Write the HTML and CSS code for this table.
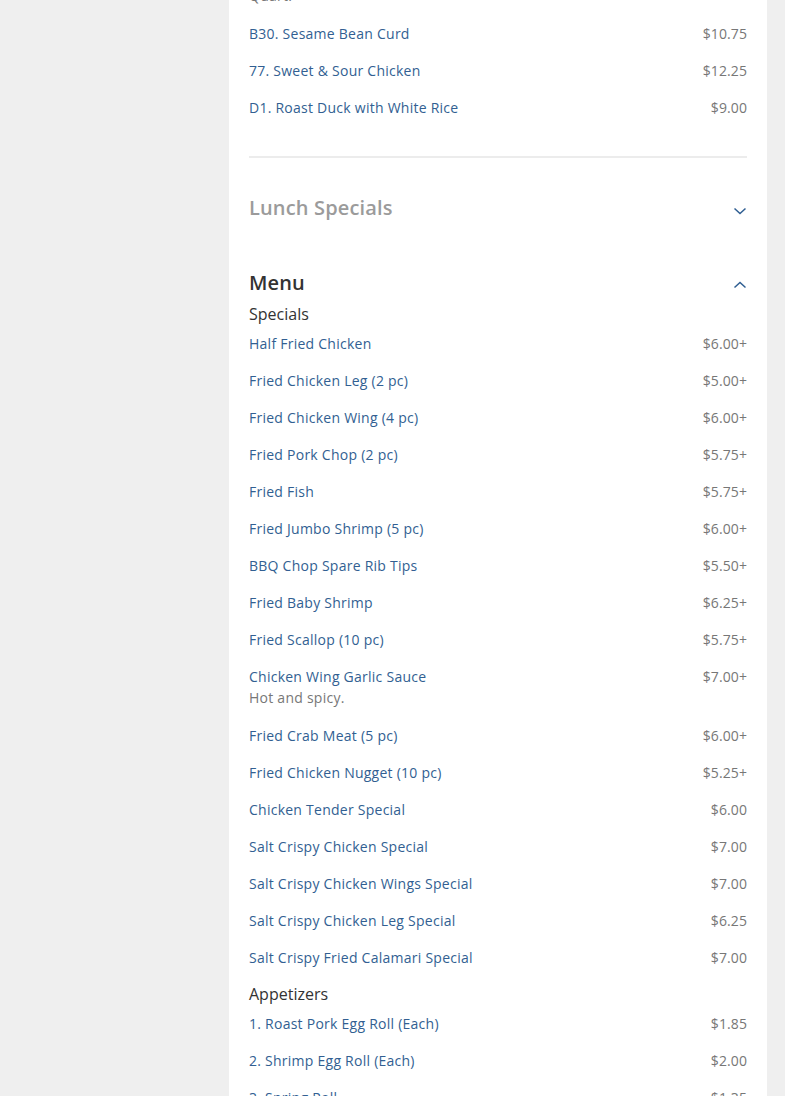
FILE: index.html
```html
<!DOCTYPE html>
<html>
<head>
<meta charset="utf-8">
<link rel="stylesheet" href="styles.css">
</head>
<body>
<div class="page">
  <aside class="side"></aside>
  <main class="card">
    <ul class="items">
      <li class="item"><div class="info"><span class="name">B29. Chicken Chow Mein</span><span class="desc">Quart.</span></div><span class="price">$9.25</span></li>
      <li class="item"><div class="info"><span class="name">B30. Sesame Bean Curd</span></div><span class="price">$10.75</span></li>
      <li class="item"><div class="info"><span class="name">77. Sweet &amp; Sour Chicken</span></div><span class="price">$12.25</span></li>
      <li class="item"><div class="info"><span class="name">D1. Roast Duck with White Rice</span></div><span class="price">$9.00</span></li>
    </ul>
    <hr class="divider">
    <section class="section">
      <div class="sec-head collapsed">
        <h2 class="sec-title">Lunch Specials</h2>
        <svg class="chev down" width="14" height="8" viewBox="0 0 14 8"><path d="M1.5 1.5l5.5 5 5.5-5" fill="none" stroke="#2f5e92" stroke-width="1.5"/></svg>
      </div>
    </section>
    <section class="section open">
      <div class="sec-head">
        <h2 class="sec-title">Menu</h2>
        <svg class="chev up" width="14" height="8" viewBox="0 0 14 8"><path d="M1.5 6.5l5.5-5 5.5 5" fill="none" stroke="#2f5e92" stroke-width="1.5"/></svg>
      </div>
      <h3 class="cat">Specials</h3>
      <ul class="items">
        <li class="item"><div class="info"><span class="name">Half Fried Chicken</span></div><span class="price">$6.00+</span></li>
        <li class="item"><div class="info"><span class="name">Fried Chicken Leg (2 pc)</span></div><span class="price">$5.00+</span></li>
        <li class="item"><div class="info"><span class="name">Fried Chicken Wing (4 pc)</span></div><span class="price">$6.00+</span></li>
        <li class="item"><div class="info"><span class="name">Fried Pork Chop (2 pc)</span></div><span class="price">$5.75+</span></li>
        <li class="item"><div class="info"><span class="name">Fried Fish</span></div><span class="price">$5.75+</span></li>
        <li class="item"><div class="info"><span class="name">Fried Jumbo Shrimp (5 pc)</span></div><span class="price">$6.00+</span></li>
        <li class="item"><div class="info"><span class="name">BBQ Chop Spare Rib Tips</span></div><span class="price">$5.50+</span></li>
        <li class="item"><div class="info"><span class="name">Fried Baby Shrimp</span></div><span class="price">$6.25+</span></li>
        <li class="item"><div class="info"><span class="name">Fried Scallop (10 pc)</span></div><span class="price">$5.75+</span></li>
        <li class="item"><div class="info"><span class="name">Chicken Wing Garlic Sauce</span><span class="desc">Hot and spicy.</span></div><span class="price">$7.00+</span></li>
        <li class="item"><div class="info"><span class="name">Fried Crab Meat (5 pc)</span></div><span class="price">$6.00+</span></li>
        <li class="item"><div class="info"><span class="name">Fried Chicken Nugget (10 pc)</span></div><span class="price">$5.25+</span></li>
        <li class="item"><div class="info"><span class="name">Chicken Tender Special</span></div><span class="price">$6.00</span></li>
        <li class="item"><div class="info"><span class="name">Salt Crispy Chicken Special</span></div><span class="price">$7.00</span></li>
        <li class="item"><div class="info"><span class="name">Salt Crispy Chicken Wings Special</span></div><span class="price">$7.00</span></li>
        <li class="item"><div class="info"><span class="name">Salt Crispy Chicken Leg Special</span></div><span class="price">$6.25</span></li>
        <li class="item"><div class="info"><span class="name">Salt Crispy Fried Calamari Special</span></div><span class="price">$7.00</span></li>
      </ul>
      <h3 class="cat">Appetizers</h3>
      <ul class="items">
        <li class="item"><div class="info"><span class="name">1. Roast Pork Egg Roll (Each)</span></div><span class="price">$1.85</span></li>
        <li class="item"><div class="info"><span class="name">2. Shrimp Egg Roll (Each)</span></div><span class="price">$2.00</span></li>
        <li class="item"><div class="info"><span class="name">3. Spring Roll</span></div><span class="price">$1.35</span></li>
        <li class="item"><div class="info"><span class="name">4. Fried Wonton</span></div><span class="price">$4.50</span></li>
      </ul>
    </section>
  </main>
  <aside class="gutter"></aside>
</div>
</body>
</html>
```

FILE: styles.css
```css
html, body {
  margin: 0;
  padding: 0;
  background: #efefef;
  height: 1096px;
  overflow: hidden;
}
body {
  font-family: "Open Sans", "Liberation Sans", sans-serif;
  color: #333;
}
.page {
  display: grid;
  grid-template-columns: 229px 538px 1fr;
  margin-top: -44px;
}
.card {
  background: #fff;
  padding: 0 20px;
  min-height: 1200px;
}
.items {
  list-style: none;
  margin: 0;
  padding: 0;
}
.item {
  display: flex;
  justify-content: space-between;
  align-items: flex-start;
  padding: 8px 0;
}
.info {
  display: flex;
  flex-direction: column;
}
.name {
  font-size: 14px;
  line-height: 21px;
  letter-spacing: 0.25px;
  color: #325f92;
}
.desc {
  font-size: 14px;
  line-height: 22px;
  letter-spacing: 0.25px;
  color: #777;
}
.price {
  font-size: 14px;
  line-height: 21px;
  letter-spacing: 0.1px;
  color: #777;
}
.divider {
  border: 0;
  border-top: 2px solid #ececec;
  margin: 30px 0 0;
}
.sec-head {
  display: flex;
  justify-content: space-between;
  align-items: center;
  padding: 36px 0 24px;
}
.open .sec-head {
  padding: 23px 0 6px;
}
.sec-title {
  margin: 0;
  font-size: 20px;
  line-height: 28px;
  font-weight: 600;
  letter-spacing: 0.15px;
  color: #333;
}
.collapsed .sec-title {
  color: #9b9b9b;
}
.chev {
  display: block;
}
.chev.down {
  margin-top: 6px;
}
.chev.up {
  margin-top: 3px;
}
.cat {
  margin: 0;
  font-size: 16px;
  line-height: 22px;
  font-weight: 400;
  color: #333;
}
.items + .cat {
  margin-top: 7px;
}
```
